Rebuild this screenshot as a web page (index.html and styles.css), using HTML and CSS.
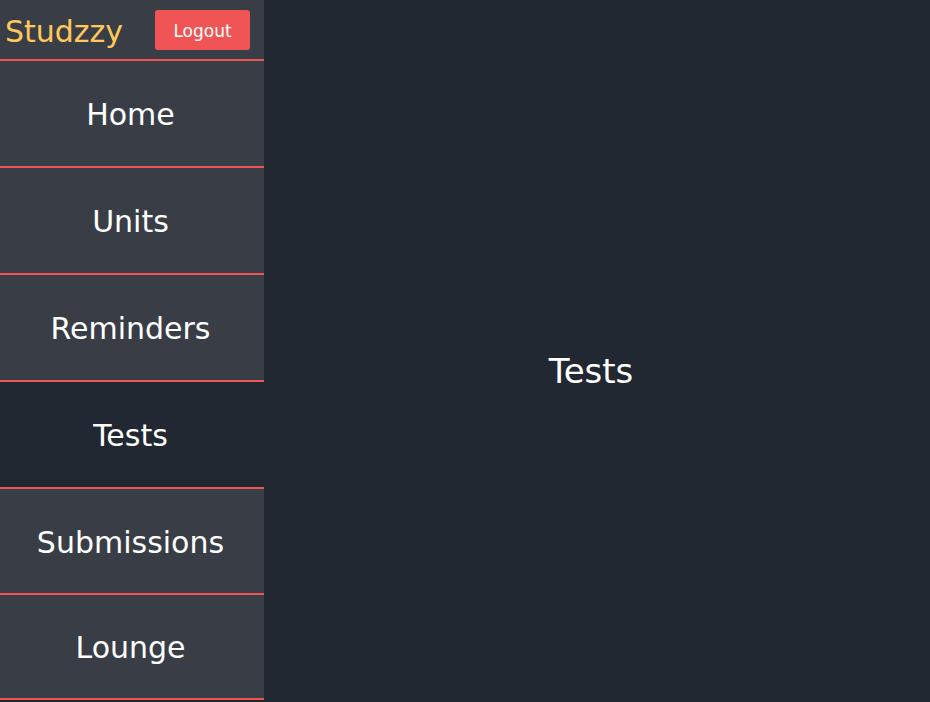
FILE: index.html
```html
<!DOCTYPE html>
<html>
<head>
<meta charset="utf-8">
<link rel="stylesheet" href="styles.css">
</head>
<body>
<div class="app">
  <aside class="sidebar">
    <header class="brand-bar">
      <span class="brand">Studzzy</span>
      <button class="logout">Logout</button>
    </header>
    <nav class="nav">
      <a class="nav-item">Home</a>
      <a class="nav-item">Units</a>
      <a class="nav-item">Reminders</a>
      <a class="nav-item active">Tests</a>
      <a class="nav-item short">Submissions</a>
      <a class="nav-item shorter">Lounge</a>
    </nav>
  </aside>
  <main class="content">
    <h1 class="page-title">Tests</h1>
  </main>
</div>
</body>
</html>
```
FILE: styles.css
```css
html, body {
  margin: 0;
  padding: 0;
  height: 100%;
  background: #222831;
  font-family: "DejaVu Sans", sans-serif;
  overflow: hidden;
}
.app {
  display: flex;
  height: 702px;
}
.sidebar {
  width: 264px;
  flex: none;
  background: #393e46;
  display: flex;
  flex-direction: column;
  align-self: flex-start;
}
.brand-bar {
  height: 61px;
  box-sizing: border-box;
  border-bottom: 2px solid #f05454;
  display: flex;
  align-items: center;
  justify-content: space-between;
  padding: 0 14px 0 5px;
}
.brand {
  color: #ffc85c;
  font-size: 30px;
  line-height: 1;
  margin-top: 4px;
}
.logout {
  background: #f05454;
  color: #fff;
  border: none;
  border-radius: 3px;
  font-family: "DejaVu Sans", sans-serif;
  font-size: 17px;
  width: 95px;
  height: 40px;
  padding: 0;
  line-height: 42px;
}
.nav {
  display: flex;
  flex-direction: column;
}
.nav-item {
  height: 107px;
  box-sizing: border-box;
  border-bottom: 2px solid #f05454;
  display: flex;
  align-items: center;
  justify-content: center;
  color: #fff;
  font-size: 30px;
  padding: 2px 3px 0 0;
}
.nav-item.short {
  height: 106px;
}
.nav-item.shorter {
  height: 105px;
}
.nav-item.active {
  background: #222831;
}
.content {
  flex: 1;
  display: flex;
  align-items: center;
  justify-content: center;
  padding: 40px 12px 0 0;
}
.page-title {
  margin: 0;
  color: #fff;
  font-weight: normal;
  font-size: 34px;
}
```
